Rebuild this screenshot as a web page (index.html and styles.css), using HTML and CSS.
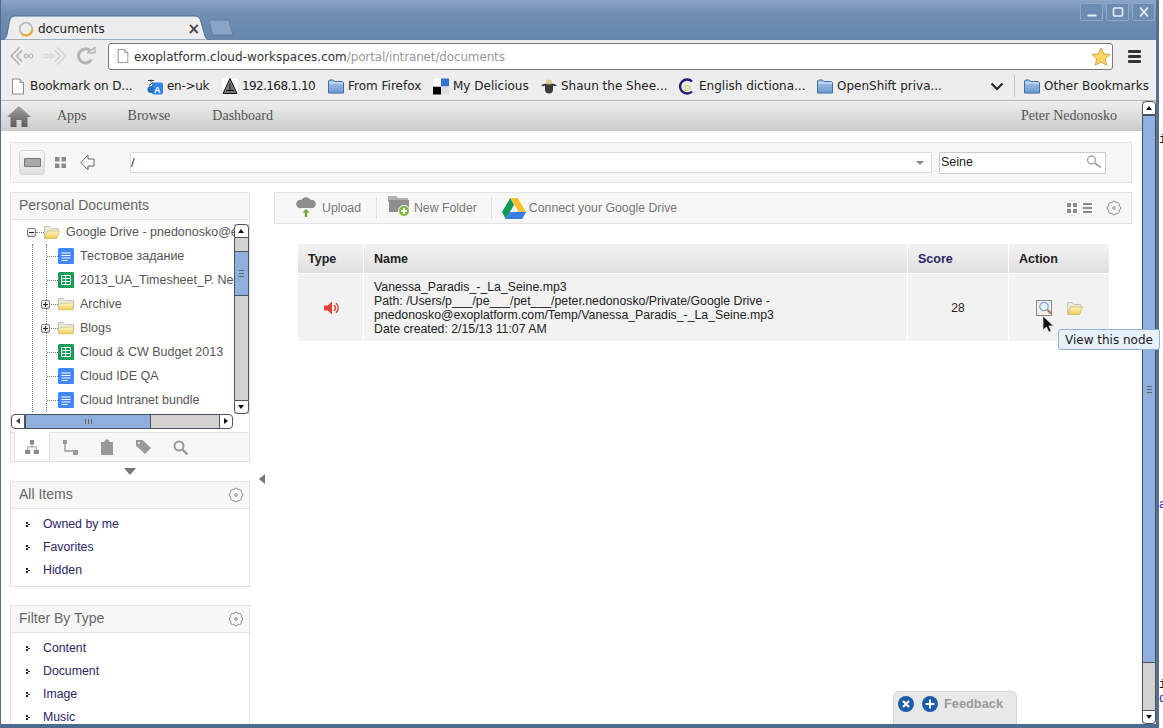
FILE: index.html
```html
<!DOCTYPE html>
<html lang="en">
<head>
<meta charset="utf-8">
<title>documents</title>
<link rel="stylesheet" href="styles.css">
</head>
<body>
<svg class="defs" width="0" height="0" aria-hidden="true">
  <defs>
    <linearGradient id="gy" x1="0" y1="0" x2="0" y2="1"><stop offset="0" stop-color="#fff6c8"/><stop offset="1" stop-color="#f0cc4e"/></linearGradient>
    <linearGradient id="gb" x1="0" y1="0" x2="0" y2="1"><stop offset="0" stop-color="#a9c6e6"/><stop offset="1" stop-color="#6a9ad0"/></linearGradient>
    <linearGradient id="gh" x1="0" y1="0" x2="0" y2="1"><stop offset="0" stop-color="#a2a2a2"/><stop offset="1" stop-color="#5c5c5c"/></linearGradient>
    <symbol id="i-doc" viewBox="0 0 16 16"><rect width="16" height="16" rx="1.5" fill="#4285f4"/><path d="M3.5 5h9M3.5 7.5h9M3.5 10h9M3.5 12.5h6" stroke="#fff" stroke-width="1"/></symbol>
    <symbol id="i-sheet" viewBox="0 0 16 16"><rect width="16" height="16" rx="1.5" fill="#0f9d58"/><path d="M3.5 3.5h9v9h-9zM3.5 6.5h9M3.5 9.5h9M7.5 3.5v9" fill="none" stroke="#fff" stroke-width="1"/></symbol>
    <symbol id="i-fy" viewBox="0 0 16 16"><path d="M.5 13.5v-11h5l1.5 2h8.500v9z" fill="#e9e6dc" stroke="#c8c4b4"/><path d="M1 14V7.500h14V14z" fill="url(#gy)" stroke="#d9c47a" stroke-width=".6"/></symbol>
    <symbol id="i-fo" viewBox="0 0 16 14"><path d="M.5 13V1.500h5l1.500 2h7v3" fill="#ece8da" stroke="#c8c4b4"/><path d="M.5 13.500l3-7.500h12l-3 7.500z" fill="url(#gy)" stroke="#c9b060" stroke-width=".7"/></symbol>
    <symbol id="i-fb" viewBox="0 0 16 16"><path d="M.5 14.500v-12l1-1h4l1.500 1.500h7.500l1 1v10.500z" fill="url(#gb)" stroke="#3f6ea8"/><path d="M1 4.500h14" stroke="#dbe8f6"/></symbol>
    <symbol id="i-page" viewBox="0 0 16 16"><path d="M2.500 .5h7.500l3.500 3.500v11.500h-11z" fill="#fff" stroke="#8a8a8a"/><path d="M10 .5v3.500h3.500" fill="#e8e8e8" stroke="#8a8a8a"/></symbol>
    <symbol id="i-gear" viewBox="0 0 16 16"><path d="M13.170 5.860A2.200 2.200 0 0 1 13.170 10.140A2.200 2.200 0 0 1 10.140 13.170A2.200 2.200 0 0 1 5.860 13.170A2.200 2.200 0 0 1 2.830 10.140A2.200 2.200 0 0 1 2.830 5.860A2.200 2.200 0 0 1 5.860 2.830A2.200 2.200 0 0 1 10.140 2.830A2.200 2.200 0 0 1 13.170 5.860z" fill="none" stroke="#8a8a8a" stroke-width="1"/><circle cx="8" cy="8" r="1.300" fill="none" stroke="#8a8a8a"/></symbol>
    <symbol id="i-grid" viewBox="0 0 11 11"><path d="M0 0h4.500v4.500H0zM6.500 0H11v4.500H6.500zM0 6.500h4.500V11H0zM6.500 6.500H11V11H6.500z" fill="#8a8a8a"/></symbol>
  </defs>
</svg>

<div class="window">
  <header class="titlebar">
    <div class="tab">
      <svg class="tab-shape" width="210" height="25" viewBox="0 0 210 25"><path d="M0 25C6 25 6 20 8 8C9 3 11 1 15 1H194C197 1 199 3 200 7L204 21C205 24 207 25 210 25Z" fill="#ededed" stroke="#4e6c92"/></svg>
      <svg class="tab-icon" width="16" height="16" viewBox="0 0 16 16"><circle cx="8" cy="8" r="6.300" fill="none" stroke="#b9b9b9" stroke-width="1.800"/><path d="M14.300 8A6.300 6.300 0 0 1 3 12" fill="none" stroke="#f0a81e" stroke-width="1.800"/></svg>
      <span class="tab-title">documents</span>
      <span class="tab-close">×</span>
    </div>
    <svg class="newtab" width="26" height="17" viewBox="0 0 26 17"><path d="M1 1H18C20 1 21 2 21.500 4L25 16H6C5 16 4.500 15 4 14Z" fill="#8ba5c6" stroke="#5f7da3"/></svg>
    <div class="winbtns">
      <button class="winbtn" type="button" aria-label="Minimize"><svg width="14" height="14" viewBox="0 0 14 14"><path d="M2.500 10.500h9" stroke="#e8eef6" stroke-width="2"/></svg></button>
      <button class="winbtn" type="button" aria-label="Maximize"><svg width="14" height="14" viewBox="0 0 14 14"><rect x="2.500" y="3" width="9" height="8" rx="1" fill="none" stroke="#e8eef6" stroke-width="1.600"/></svg></button>
      <button class="winbtn" type="button" aria-label="Close"><svg width="14" height="14" viewBox="0 0 14 14"><path d="M3 2.500l8 9M11 2.500l-8 9" stroke="#eef2f8" stroke-width="1.700"/></svg></button>
    </div>
  </header>

  <div class="toolbar">
    <svg class="nav-ic back" width="24" height="20" viewBox="0 0 24 20"><path d="M9.500 1.500L1 10l8.500 8.500M12 4.500L6.500 10l5.500 5.500" fill="none" stroke="#a8a8a8" stroke-width="1.300"/><circle cx="16" cy="10" r="2" fill="none" stroke="#a8a8a8"/><circle cx="21" cy="10" r="2" fill="none" stroke="#a8a8a8"/></svg>
    <svg class="nav-ic fwd" width="24" height="20" viewBox="0 0 24 20"><path d="M14.500 1.500L23 10l-8.500 8.500M12 4.500L17.500 10 12 15.500" fill="none" stroke="#d0d0d0" stroke-width="1.300"/><circle cx="8" cy="10" r="2" fill="none" stroke="#d0d0d0"/><circle cx="3" cy="10" r="2" fill="none" stroke="#d0d0d0"/></svg>
    <svg class="nav-ic reload" width="20" height="20" viewBox="0 0 20 20"><path d="M15.500 13.500A7 7 0 1 1 14 4.500" fill="none" stroke="#b4b4b4" stroke-width="3"/><path d="M11 7h8V1z" fill="#dcdcdc" stroke="#a8a8a8"/></svg>
    <div class="omnibox">
      <svg class="omni-page" width="14" height="16"><use href="#i-page"/></svg>
      <span class="url">exoplatform.cloud-workspaces.com<span class="url-dim">/portal/intranet/documents</span></span>
      <svg class="star" width="20" height="19" viewBox="0 0 20 19"><path d="M10 1l2.700 5.800 6.300.8-4.600 4.300 1.200 6.200L10 15l-5.600 3.100 1.200-6.200L1 7.600l6.300-.8z" fill="#f9d466" stroke="#d9a640"/></svg>
    </div>
    <div class="hamburger"><i></i><i></i><i></i></div>
  </div>

  <div class="bookmarks">
    <a class="bm bm-1"><svg width="16" height="17"><use href="#i-page"/></svg>Bookmark on D...</a>
    <a class="bm bm-2"><svg width="16" height="17" viewBox="0 0 16 16"><rect x="5" y="4" width="11" height="12" rx="2" fill="#2d86e6"/><text class="glyph-a" x="7" y="14">A</text><circle cx="4" cy="11" r="3.500" fill="#2a6fc0"/><path d="M1 2h6M4 1v3M2 7l4-3" stroke="#444" fill="none"/></svg>en-&gt;uk</a>
    <a class="bm bm-3"><svg width="16" height="17" viewBox="0 0 16 16"><rect width="16" height="16" fill="#fff"/><path d="M8 0L15 15H1zM8 5v7M4 12h8" fill="#777" stroke="#111"/></svg>192.168.1.10</a>
    <a class="bm bm-4"><svg width="16" height="17"><use href="#i-fb"/></svg>From Firefox</a>
    <a class="bm bm-5"><svg width="16" height="17" viewBox="0 0 16 16"><path d="M8 0h8v8H8z" fill="#3274d1"/><path d="M0 8h8v8H0z" fill="#000"/><path d="M8 8h8v8H8z" fill="#dedede"/><path d="M0 0h8v8H0z" fill="#fff"/></svg>My Delicious</a>
    <a class="bm bm-6"><svg width="16" height="17" viewBox="0 0 16 16"><path d="M0 7c3-2 5-2 8-2s5 0 8 2c-2 1-3 1-4 0v4c0 3-2 4-4 4s-4-1-4-4V7C3 8 2 8 0 7z" fill="#3a3a3a"/><ellipse cx="8" cy="3.500" rx="3" ry="2.500" fill="#d9c88c"/></svg>Shaun the Shee...</a>
    <a class="bm bm-7"><svg width="16" height="17" viewBox="0 0 16 16"><path d="M13 3A7 7 0 1 0 13 13" fill="none" stroke="#24197a" stroke-width="2.400"/><text class="glyph-d" x="5" y="12.500">D</text></svg>English dictiona...</a>
    <a class="bm bm-8"><svg width="16" height="17"><use href="#i-fb"/></svg>OpenShift priva...</a>
    <svg class="bm-chevron" width="14" height="9" viewBox="0 0 14 9"><path d="M1.500 1.500L7 7l5.500-5.500" fill="none" stroke="#222" stroke-width="2"/></svg>
    <span class="bm-sep"></span>
    <a class="bm bm-9"><svg width="16" height="17"><use href="#i-fb"/></svg>Other Bookmarks</a>
  </div>

  <div class="page">
    <div class="content">
      <nav class="portalnav">
        <svg class="home" width="24" height="22" viewBox="0 0 24 22"><path d="M12 1L0 12h3.500v10h6v-7h5v7h6V12H24z" fill="url(#gh)"/></svg>
        <a class="pn pn-apps">Apps</a>
        <a class="pn pn-browse">Browse</a>
        <a class="pn pn-dash">Dashboard</a>
        <a class="pn pn-user">Peter Nedonosko</a>
      </nav>

      <div class="pathbar">
        <button class="viewtoggle" type="button" aria-label="List view"><i></i></button>
        <svg class="pb-grid" width="11" height="11"><use href="#i-grid"/></svg>
        <svg class="pb-back" width="15" height="17" viewBox="0 0 15 17"><path d="M8 1L1 8.500 8 16v-4h6V5H8z" fill="#fafafa" stroke="#666"/></svg>
        <div class="pathinput"><span>/</span><b class="caret"></b></div>
        <div class="searchinput"><span>Seine</span>
          <svg width="16" height="14" viewBox="0 0 16 14"><circle cx="5.500" cy="5" r="4" fill="#fff" stroke="#a8a8a8" stroke-width="1.400"/><path d="M8.800 8l6 4.500" stroke="#a8a8a8" stroke-width="2"/></svg>
        </div>
      </div>

      <div class="columns">
        <aside class="sidebar">
          <section class="panel panel-tree">
            <h3 class="panel-head">Personal Documents</h3>
            <div class="treewrap">
              <div class="tree">
                <div class="root-row"><span class="exp exp-minus"></span><span class="dash dash-root"></span><svg width="16" height="14"><use href="#i-fo"/></svg><span class="lbl">Google Drive - pnedonosko@exoplatform.com</span></div>
                <div class="branch">
                  <ul class="leafs">
                    <li class="node"><span class="dash"></span><svg width="16" height="16"><use href="#i-doc"/></svg><span class="lbl">Тестовое задание</span></li>
                    <li class="node"><span class="dash"></span><svg width="16" height="16"><use href="#i-sheet"/></svg><span class="lbl">2013_UA_Timesheet_P. Nedonosko</span></li>
                    <li class="node"><span class="exp exp-plus"></span><span class="dash"></span><svg width="16" height="16"><use href="#i-fy"/></svg><span class="lbl">Archive</span></li>
                    <li class="node"><span class="exp exp-plus"></span><span class="dash"></span><svg width="16" height="16"><use href="#i-fy"/></svg><span class="lbl">Blogs</span></li>
                    <li class="node"><span class="dash"></span><svg width="16" height="16"><use href="#i-sheet"/></svg><span class="lbl">Cloud &amp; CW Budget 2013</span></li>
                    <li class="node"><span class="dash"></span><svg width="16" height="16"><use href="#i-doc"/></svg><span class="lbl">Cloud IDE QA</span></li>
                    <li class="node"><span class="dash"></span><svg width="16" height="16"><use href="#i-doc"/></svg><span class="lbl">Cloud Intranet bundle</span></li>
                  </ul>
                </div>
              </div>
              <div class="vscroll vscroll-tree">
                <span class="sb-btn sb-up"></span><span class="sb-track sb-t1"></span><span class="sb-thumb sb-th1"><em></em></span><span class="sb-track sb-fill"></span><span class="sb-btn sb-down"></span>
              </div>
            </div>
            <div class="hscroll">
              <span class="hb-btn hb-left"></span><span class="hb-thumb"><em></em></span><span class="hb-track"></span><span class="hb-btn hb-right"></span>
            </div>
            <div class="sidetabs">
              <span class="stab stab-on"><svg width="14" height="16" viewBox="0 0 16 16"><path d="M5.500 0h5v5h-5zM0 11h6v5H0zM10 11h6v5h-6z" fill="#8c8c8c"/><path d="M8 5v3M3 11V8h10v3" fill="none" stroke="#8c8c8c"/></svg></span>
              <span class="stab stab-2"><svg width="15" height="15" viewBox="0 0 15 15"><path d="M0 0h4v4H0zM10 10h5v5h-5z" fill="#999"/><path d="M2 3v8h9" fill="none" stroke="#999" stroke-width="1.400"/></svg></span>
              <span class="stab stab-3"><svg width="12" height="16" viewBox="0 0 12 16"><path d="M0 3h3.500V2L6 0l2.500 2v1H12v13H0z" fill="#999"/></svg></span>
              <span class="stab stab-4"><svg width="15" height="14" viewBox="0 0 15 14"><path d="M0 0h6.500L15 8l-6 6-9-8.500z" fill="#999"/><circle cx="3" cy="3" r="1" fill="#f7f7f7"/></svg></span>
              <span class="stab stab-5"><svg width="15" height="15" viewBox="0 0 15 15"><circle cx="6" cy="6" r="4.500" fill="none" stroke="#999" stroke-width="2"/><path d="M9.500 9.500l5 5" stroke="#999" stroke-width="2.400"/></svg></span>
            </div>
          </section>
          <b class="side-arrow"></b>
          <section class="panel panel-items">
            <h3 class="panel-head">All Items<svg width="16" height="16"><use href="#i-gear"/></svg></h3>
            <ul class="linklist">
              <li>Owned by me</li>
              <li>Favorites</li>
              <li>Hidden</li>
            </ul>
          </section>
          <section class="panel panel-filter">
            <h3 class="panel-head">Filter By Type<svg width="16" height="16"><use href="#i-gear"/></svg></h3>
            <ul class="linklist">
              <li>Content</li>
              <li>Document</li>
              <li>Image</li>
              <li>Music</li>
            </ul>
          </section>
        </aside>

        <div class="collapser"><b></b></div>

        <main class="main">
          <div class="actionbar">
            <a class="act act-up"><svg width="20" height="20" viewBox="0 0 20 20"><g fill="#8e8e8e"><circle cx="4.500" cy="7" r="4.300"/><circle cx="10" cy="5" r="4.800"/><circle cx="15.500" cy="7" r="4.300"/><rect x="4" y="6" width="12" height="5"/></g><path d="M10 12l3.500 3.500H11.200V20H8.800v-4.500H6.500z" fill="#6aa52e"/></svg>Upload</a>
            <span class="act-sep"></span>
            <a class="act act-nf"><svg width="22" height="21" viewBox="0 0 22 21"><path d="M0 3V0h8l2 2h10v4H0z" fill="#b0b0b0"/><path d="M1 16V4h20v12z" fill="#8e8e8e"/><circle cx="16" cy="15" r="5.500" fill="#7cb53a" stroke="#fff"/><path d="M13 15h6M16 12v6" stroke="#fff" stroke-width="1.800"/></svg>New Folder</a>
            <span class="act-sep act-sep2"></span>
            <a class="act act-drive"><svg width="24" height="21" viewBox="0 0 24 21"><path d="M8.300 0h7.400L24 14h-7.400z" fill="#fbc02d"/><path d="M8.300 0L0 14l3.700 7L12 7z" fill="#0f9d58"/><path d="M3.700 21h16.600L24 14H7.700z" fill="#3a7ce6"/></svg>Connect your Google Drive</a>
            <span class="act-right">
              <svg width="10" height="10"><use href="#i-grid"/></svg>
              <span class="listic"><i></i><i></i><i></i></span>
              <svg class="act-gear" width="16" height="16"><use href="#i-gear"/></svg>
            </span>
          </div>

          <div class="results">
            <div class="rcell rhead c-type">Type</div>
            <div class="rcell rhead c-name">Name</div>
            <div class="rcell rhead c-score"><a>Score</a></div>
            <div class="rcell rhead c-action">Action</div>
            <div class="rcell rbody c-type"><svg width="16" height="14" viewBox="0 0 16 14"><path d="M0 4.500h3.500L8 .5v13l-4.500-4H0z" fill="#e0473a"/><path d="M10 4a4 4 0 0 1 0 6M12 2a7 7 0 0 1 0 10" fill="none" stroke="#e0473a" stroke-width="1.500"/></svg></div>
            <div class="rcell rbody c-name">
              <p>Vanessa_Paradis_-_La_Seine.mp3</p>
              <p>Path: /Users/p___/pe___/pet___/peter.nedonosko/Private/Google Drive -<br>pnedonosko@exoplatform.com/Temp/Vanessa_Paradis_-_La_Seine.mp3</p>
              <p>Date created: 2/15/13 11:07 AM</p>
            </div>
            <div class="rcell rbody c-score">28</div>
            <div class="rcell rbody c-action">
              <span class="viewbtn"><svg width="15" height="15" viewBox="0 0 15 15"><circle cx="7" cy="6.500" r="4.200" fill="#e6f0fb" stroke="#86a4c8" stroke-width="1.200"/><path d="M10.500 10l3.500 3.500" stroke="#b8703a" stroke-width="2"/></svg></span>
              <svg class="openic" width="16" height="14"><use href="#i-fo"/></svg>
            </div>
          </div>
        </main>
      </div>
    </div>

    <div class="vscroll vscroll-page">
      <span class="sb-btn sb-up"></span><span class="sb-thumb sb-th2"><em></em></span><span class="sb-track sb-fill"></span><span class="sb-btn sb-down"></span>
    </div>

    <div class="feedback">
      <span class="fb-ic"><svg width="16" height="16" viewBox="0 0 16 16"><circle cx="8" cy="8" r="8" fill="#1f5ca8"/><path d="M5 5l6 6M11 5l-6 6" stroke="#fff" stroke-width="2.200"/></svg></span>
      <span class="fb-ic"><svg width="16" height="16" viewBox="0 0 16 16"><circle cx="8" cy="8" r="8" fill="#1f5ca8"/><path d="M3.500 8h9M8 3.500v9" stroke="#fff" stroke-width="2"/></svg></span>
      <span class="fb-text">Feedback</span>
    </div>
  </div>
</div>

<div class="strip">
  <span class="frag frag-1">i</span>
  <span class="frag frag-2">a</span>
  <span class="frag frag-3">i</span>
  <span class="frag frag-4">d</span>
</div>

<div class="tooltip">View this node</div>
<svg class="cursor" width="13" height="18" viewBox="0 0 13 18"><path d="M1 1v14l3.500-3 2.300 5 2.400-1-2.300-5H11.500z" fill="#111" stroke="#ddd" stroke-width=".8"/></svg>
</body>
</html>
```
FILE: styles.css
```css
* { box-sizing: border-box; }
html, body { margin: 0; height: 100%; overflow: hidden; }
body { display: flex; width: 1163px; height: 728px; position: relative; background: #fff; font-family: "Liberation Sans", Arial, sans-serif; font-size: 12px; color: #222; }
.defs { position: absolute; }
ul { list-style: none; margin: 0; padding: 0; }
h3, p { margin: 0; font-weight: normal; }
a { color: inherit; text-decoration: none; }
button { padding: 0; margin: 0; font: inherit; }
svg { display: block; flex: none; }

.window { width: 1159px; height: 728px; flex: none; display: flex; flex-direction: column; border-left: 1px solid #4f6b90; border-right: 3px solid #56708f; border-bottom: 4px solid #4f6a8f; background: #fff; }
.strip { flex: 1; position: relative; }
.frag { position: absolute; left: 0; font: 12px "Liberation Mono", monospace; line-height: 12px; }
.frag-1 { top: 134px; color: #111; }
.frag-2 { top: 499px; left: 0; color: #2222dd; }
.frag-3 { top: 679px; color: #111; }
.frag-4 { top: 693px; color: #2222dd; }

/* title bar */
.titlebar { height: 40px; flex: none; display: flex; align-items: flex-start; background: linear-gradient(#8aa5c6 0, #6f8eb2 14px, #6686ab 100%); position: relative; }
.tab { width: 210px; height: 25px; margin-top: 15px; flex: none; display: flex; align-items: center; position: relative; padding: 2px 0 0 17px; font: 12px "DejaVu Sans", sans-serif; color: #222; }
.tab-shape { position: absolute; left: 0; top: 0; }
.tab-icon { position: relative; }
.tab-title { position: relative; margin-left: 4px; flex: 1; }
.tab-close { position: relative; margin-right: 11px; font-size: 15px; font-weight: bold; color: #444; }
.newtab { margin-top: 19px; margin-left: -3px; }
.winbtns { margin-left: auto; margin-top: 3px; margin-right: 1px; display: flex; gap: 3px; }
.winbtn { width: 23px; height: 18px; background: #6d8cb1; border: 1px solid #8ea8c8; border-radius: 2px; display: flex; align-items: center; justify-content: center; }

/* toolbar */
.toolbar { height: 32px; flex: none; background: #ededed; display: flex; align-items: center; position: relative; }
.nav-ic { flex: none; }
.back { margin-left: 9px; }
.fwd { margin-left: 9px; }
.reload { margin-left: 9px; }
.omnibox { width: 1005px; height: 27px; margin-left: 12px; display: flex; align-items: center; background: #fff; border: 1px solid #7d7a72; border-radius: 3px; padding-left: 7px; }
.url { margin-left: 4px; padding-top: 1px; flex: 1; font: 12px "DejaVu Sans", sans-serif; color: #333; white-space: nowrap; }
.url-dim { color: #999; letter-spacing: -.15px; }
.star { margin-right: 1px; }
.hamburger { margin-left: 15px; width: 13px; display: flex; flex-direction: column; gap: 2px; }
.hamburger i { display: block; height: 3px; background: #333; border-radius: 1px; }

/* bookmarks */
.bookmarks { height: 29px; flex: none; background: #ededed; border-bottom: 1px solid #b9b9b7; display: flex; align-items: center; padding-left: 9px; font: 12px "DejaVu Sans", sans-serif; color: #222; white-space: nowrap; }
.bm { display: flex; align-items: center; gap: 4px; flex: none; }
.bm-1 { width: 137px; letter-spacing: -.1px; }
.bm-2 { width: 75px; letter-spacing: -.3px; }
.bm-3 { width: 106px; letter-spacing: -.6px; }
.bm-4 { width: 105px; }
.bm-5 { width: 108px; }
.bm-6 { width: 138px; }
.bm-7 { width: 138px; }
.bm-chevron { margin-left: auto; }
.bm-sep { width: 1px; height: 22px; background: #c4c4c4; margin: 0 9px 0 10px; }
.bm-9 { margin-right: 7px; }
.glyph-a { font: bold 9px "Liberation Sans", sans-serif; fill: #fff; }
.glyph-d { font: 9px "Liberation Serif", serif; fill: #b7c92c; }

/* page */
.page { flex: 1; min-height: 0; display: flex; position: relative; }
.content { width: 1141px; flex: none; overflow: hidden; display: flex; flex-direction: column; }
.portalnav { height: 30px; flex: none; display: flex; align-items: center; position: relative; background: linear-gradient(#efefef, #cbcbcb); font: 14px "Liberation Serif", serif; color: #555; }
.home { margin-left: 6px; }
.pn-apps { margin-left: 26px; }
.pn-browse { margin-left: 41px; }
.pn-dash { margin-left: 42px; }
.pn-user { margin-left: auto; margin-right: 25px; }

.pathbar { height: 41px; margin: 11px 9px 0; width: 1122px; flex: none; display: flex; align-items: center; background: #f7f7f7; border: 1px solid #e4e4e4; padding-left: 8px; }
.viewtoggle { width: 26px; height: 25px; background: linear-gradient(#f9f9f9, #dfdfdf); border: 1px solid #d4d4d4; border-radius: 4px; display: flex; align-items: center; justify-content: center; }
.viewtoggle i { display: block; width: 17px; height: 9px; background: #aaa; border: 1px solid #777; border-radius: 1px; }
.pb-grid { margin-left: 10px; }
.pb-back { margin-left: 14px; }
.pathinput { width: 802px; height: 21px; margin-left: 35px; background: #fff; border: 1px solid #dcdcdc; display: flex; align-items: center; justify-content: space-between; font-size: 13px; color: #333; padding: 0 4px 0 0; }
.caret { width: 0; height: 0; border: 4px solid transparent; border-top: 4px solid #888; border-bottom: 0; margin-right: 3px; }
.searchinput { width: 167px; height: 22px; margin-left: 7px; background: #fff; border: 1px solid #ccc; display: flex; align-items: center; justify-content: space-between; font-size: 12.500px; color: #222; padding: 0 3px 2px 1px; }

.columns { flex: 1; min-height: 0; display: flex; margin: 9px 0 0 9px; }
.sidebar { width: 240px; flex: none; }
.panel { background: #fff; border: 1px solid #e3e3e3; }
.panel-head { height: 27px; padding: 0 5px 3px 8px; display: flex; align-items: center; justify-content: space-between; font-size: 14px; color: #666; background: #f7f7f7; border-bottom: 1px solid #e3e3e3; }
.panel-head svg { margin-top: 3px; }
.treewrap { display: flex; height: 194px; }
.tree { width: 223px; flex: none; overflow: hidden; font-size: 12.500px; color: #555; white-space: nowrap; }
.lbl { margin-left: 6px; }
.root-row { height: 24px; display: flex; align-items: center; padding-left: 16px; }
.exp { width: 9px; height: 9px; flex: none; background: linear-gradient(#fff, #ddd); border: 1px solid #777; border-radius: 2px; position: relative; }
.exp::before { content: ""; position: absolute; left: 1px; right: 1px; top: 3px; height: 1px; background: #222; }
.exp-plus::after { content: ""; position: absolute; top: 1px; bottom: 1px; left: 3px; width: 1px; background: #222; }
.dash { height: 0; border-top: 1px dotted #777; flex: none; width: 11px; }
.dash-root { width: 8px; }
.branch { margin-left: 21px; border-left: 1px dotted #777; }
.leafs { margin-left: 13px; border-left: 1px dotted #777; }
.node { height: 24px; display: flex; align-items: center; position: relative; }
.exp-plus { position: absolute; left: -6px; top: 8px; }

.vscroll { flex: none; width: 15px; display: flex; flex-direction: column; background: #d3d2cf; }
.vscroll-tree { margin-top: 4px; border: 0; }
.sb-btn { height: 14px; flex: none; background: #fff; border: 1px solid #4c5360; position: relative; }
.sb-up { border-radius: 4px 4px 0 0; }
.sb-down { border-radius: 0 0 4px 4px; }
.sb-up::after, .sb-down::after { content: ""; position: absolute; left: 3px; top: 4px; width: 0; height: 0; border: 3.500px solid transparent; }
.sb-up::after { border-bottom: 4px solid #111; border-top: 0; }
.sb-down::after { border-top: 4px solid #111; border-bottom: 0; }
.sb-track { background: #d3d2cf; border-left: 1px solid #4c5360; border-right: 1px solid #4c5360; }
.sb-t1 { height: 13px; flex: none; }
.sb-fill { flex: 1; }
.sb-thumb { flex: none; background: #8fb0dc; border: 1px solid #4c5360; border-width: 1px; display: flex; align-items: center; justify-content: center; }
.sb-thumb em { display: block; width: 5px; height: 7px; border-top: 1px solid #666; border-bottom: 1px solid #666; background: linear-gradient(#666, #666) 0 2px / 100% 1px no-repeat; }
.sb-th1 { height: 45px; }
.vscroll-page { width: 14px; }
.sb-th2 { height: 548px; }

.hscroll { display: flex; width: 222px; height: 15px; margin-bottom: 3px; }
.hb-btn { width: 14px; flex: none; background: #fff; border: 1px solid #4c5360; position: relative; }
.hb-left { border-radius: 4px 0 0 4px; }
.hb-right { border-radius: 0 4px 4px 0; }
.hb-left::after, .hb-right::after { content: ""; position: absolute; top: 3px; left: 4px; border: 3.500px solid transparent; }
.hb-left::after { border-right: 4px solid #444; border-left: 0; }
.hb-right::after { border-left: 4px solid #111; border-right: 0; }
.hb-thumb { width: 126px; flex: none; background: #8fb0dc; border: 1px solid #4c5360; display: flex; align-items: center; justify-content: center; }
.hb-thumb em { display: block; width: 7px; height: 5px; border-left: 1px solid #666; border-right: 1px solid #666; background: linear-gradient(#666, #666) 2px 0 / 1px 100% no-repeat; }
.hb-track { flex: 1; background: #d3d2cf; border-top: 1px solid #4c5360; border-bottom: 1px solid #4c5360; }

.sidetabs { height: 29px; background: #f7f7f7; border-top: 1px solid #e3e3e3; display: flex; align-items: center; position: relative; padding-left: 3px; }
.stab { display: flex; align-items: center; justify-content: center; height: 100%; }
.stab-on { width: 36px; background: #fff; border-left: 1px solid #e3e3e3; border-right: 1px solid #e3e3e3; height: 29px; margin-top: -1px; }
.stab-2 { margin-left: 13px; }
.stab-3 { margin-left: 23px; }
.stab-4 { margin-left: 23px; }
.stab-5 { margin-left: 22px; }

.side-arrow { display: block; width: 0; height: 0; margin: 6px auto 6px; border: 6px solid transparent; border-top: 7px solid #777; border-bottom: 0; }
.panel-items { margin-bottom: 18px; }
.linklist { padding: 3px 0 5px 0; font-size: 12.300px; color: #2d2566; }
.linklist li { height: 23px; display: flex; align-items: center; padding-left: 32px; position: relative; }
.linklist li::before { content: ""; position: absolute; left: 15px; top: 10px; width: 4px; height: 5px; background: radial-gradient(circle at 1px 1px, #222 1px, transparent 1.200px) 0 0 / 100% 3px, linear-gradient(#222, #222) 2px 2px / 2px 1px no-repeat; }

.collapser { width: 24px; flex: none; position: relative; }
.collapser b { position: absolute; left: 9px; top: 282px; width: 0; height: 0; border: 5.500px solid transparent; border-right: 6px solid #777; border-left: 0; }

.main { width: 858px; flex: none; }
.actionbar { height: 32px; display: flex; align-items: center; background: #f7f7f7; border: 1px solid #e3e3e3; color: #777; font-size: 12.300px; padding-left: 21px; }
.act { display: flex; align-items: center; }
.act-up svg { margin-right: 6px; margin-top: -3px; }
.act-nf svg { margin-right: 4px; margin-top: -3px; }
.act-drive svg { margin-right: 3px; }
.act-sep { width: 1px; height: 22px; background: #e0e0e0; margin: 0 11px 0 15px; }
.act-sep2 { margin: 0 10px 0 14px; }
.act-right { margin-left: auto; display: flex; align-items: center; padding-right: 9px; }
.listic { margin-left: 6px; width: 9px; display: flex; flex-direction: column; gap: 2px; }
.listic i { display: block; height: 2px; background: #8a8a8a; }
.act-gear { margin-left: 14px; }

.results { display: grid; width: 811px; margin: 20px 0 0 24px; grid-template-columns: 66px 544px 101px 100px; grid-template-rows: 30px 67px; }
.rcell { border-right: 1px solid #fff; }
.rcell:nth-child(4n) { border-right: 0; }
.rhead { background: linear-gradient(#f3f3f3, #dfdfdf); font-weight: bold; font-size: 12.500px; color: #222; display: flex; align-items: center; padding-left: 10px; border-bottom: 1px solid #fff; }
.rhead a { color: #2d2566; }
.rbody { background: #f2f2f2; }
.rbody.c-type { display: flex; align-items: center; justify-content: center; padding-left: 2px; }
.rbody.c-name { padding: 6px 0 0 10px; font-size: 12.300px; line-height: 14px; color: #222; white-space: nowrap; }
.rbody.c-score { display: flex; align-items: center; justify-content: center; font-size: 12px; }
.rbody.c-action { display: flex; align-items: center; padding-left: 27px; }
.viewbtn { width: 16px; height: 16px; border: 1px solid #888; background: #eee; display: flex; align-items: center; justify-content: center; }
.openic { margin-left: 15px; }

.feedback { position: absolute; left: 892px; bottom: 0; width: 124px; height: 33px; background: #e9e9e9; border: 1px solid #d5d5d5; border-bottom: 0; border-radius: 6px 6px 0 0; display: flex; align-items: flex-start; padding: 4px 0 0 4px; font-weight: bold; font-size: 12.800px; color: #9a9a9a; }
.fb-ic + .fb-ic { margin-left: 8px; }
.fb-text { margin-left: 6px; line-height: 16px; }

.tooltip { position: absolute; left: 1058px; top: 329px; width: 102px; height: 21px; background: #e6f1fc; border: 1px solid #8fb0dc; border-radius: 3px; font: 12px "DejaVu Sans", sans-serif; color: #222; display: flex; align-items: center; justify-content: center; white-space: nowrap; }
.cursor { position: absolute; left: 1042px; top: 315px; }
```
